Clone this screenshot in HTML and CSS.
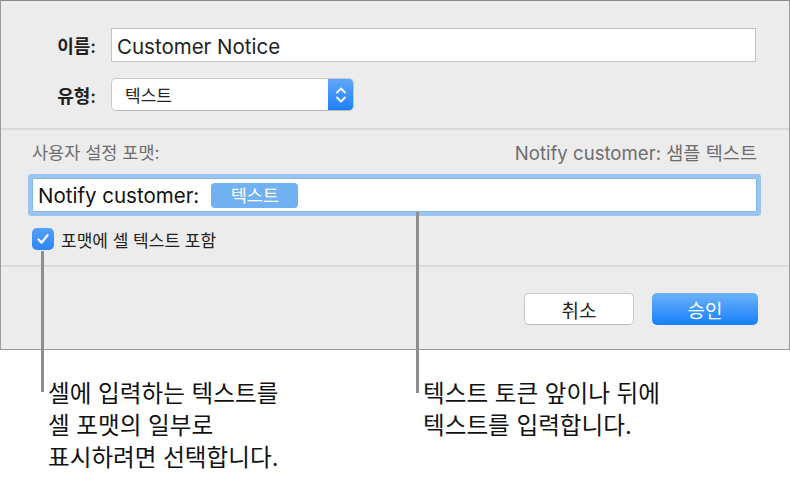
FILE: index.html
```html
<!DOCTYPE html>
<html lang="ko">
<head>
<meta charset="utf-8">
<title>Custom Format</title>
<link rel="stylesheet" href="styles.css">
</head>
<body>
<div class="dialog">
  <div class="top">
    <div class="row">
      <span class="lbl">이름:</span>
      <div class="input">Customer Notice</div>
    </div>
    <div class="row row2">
      <span class="lbl">유형:</span>
      <div class="select">
        <span class="select-text">텍스트</span>
        <span class="stepper">
          <svg width="12" height="20" viewBox="0 0 12 20"><path d="M2 7.5 L6 3.5 L10 7.5 M2 12.5 L6 16.5 L10 12.5" fill="none" stroke="#fff" stroke-width="1.8" stroke-linecap="round" stroke-linejoin="round"/></svg>
        </span>
      </div>
    </div>
  </div>
  <div class="sep"></div>
  <div class="mid">
    <div class="head">
      <span>사용자 설정 포맷:</span>
      <span>Notify customer: 샘플 텍스트</span>
    </div>
    <div class="tokenfield">
      <span class="prefix">Notify customer:</span>
      <span class="token">텍스트</span>
    </div>
    <div class="check">
      <span class="box">
        <svg width="14" height="14" viewBox="0 0 14 14"><path d="M2.5 7.5 L5.6 10.6 L11.5 3.2" fill="none" stroke="#fff" stroke-width="2.2" stroke-linecap="round" stroke-linejoin="round"/></svg>
      </span>
      <span class="check-label">포맷에 셀 텍스트 포함</span>
    </div>
  </div>
  <div class="sep"></div>
  <div class="foot">
    <button class="btn">취소</button>
    <button class="btn primary">승인</button>
  </div>
</div>
<div class="notes">
  <p class="note note-left">셀에 입력하는 텍스트를<br>셀 포맷의 일부로<br>표시하려면 선택합니다.</p>
  <p class="note note-right">텍스트 토큰 앞이나 뒤에<br>텍스트를 입력합니다.</p>
</div>
<div class="leader leader-check"></div>
<div class="leader leader-field"></div>
</body>
</html>
```
FILE: styles.css
```css
* { box-sizing: border-box; }
html, body { margin: 0; padding: 0; }
body {
  width: 790px;
  height: 487px;
  background: #fff;
  font-family: Inter, "Noto Sans CJK KR", sans-serif;
  color: #1e1e1e;
  position: relative;
  overflow: hidden;
}
.dialog {
  width: 790px;
  height: 350px;
  background: #ececec;
  border: 1px solid #9a9a9a;
  border-top-color: #8c8c8c;
  display: flex;
  flex-direction: column;
}
.top {
  padding: 27px 0 17px 0;
}
.row {
  display: flex;
  align-items: center;
  height: 34px;
}
.row2 {
  margin-top: 16px;
  height: 33px;
}
.lbl {
  width: 95px;
  text-align: right;
  margin-right: 15px;
  font-size: 18px;
  font-weight: 600;
  color: #222;
}
.input {
  width: 645px;
  height: 34px;
  background: #fff;
  border: 1px solid #c3c3c3;
  border-top-color: #bdbdbd;
  font-size: 20.5px;
  line-height: 32px;
  padding: 2px 0 0 5px;
  color: #222;
}
.select {
  width: 243px;
  height: 33px;
  background: #fff;
  border: 1px solid #c9c9c9;
  border-bottom-color: #b9b9b9;
  border-radius: 5px;
  display: flex;
  align-items: center;
  overflow: hidden;
}
.select-text {
  flex: 1;
  padding-left: 13px;
  font-size: 17px;
  color: #222;
}
.stepper {
  width: 26px;
  height: 33px;
  margin: -1px -1px -1px 0;
  border-radius: 0 5px 5px 0;
  background: linear-gradient(#62a8fa, #1a7ffb);
  display: flex;
  align-items: center;
  justify-content: center;
}
.sep {
  height: 2px;
  background: #dadada;
}
.mid {
  padding: 13px 32px 15px 31px;
}
.head {
  display: flex;
  justify-content: space-between;
  font-size: 18.6px;
  line-height: 20px;
  color: #6e6e6e;
}
.head span:first-child { font-size: 17.5px; }
.tokenfield {
  margin: 15px 0 0 0;
  height: 34px;
  background: #fff;
  border: 1px solid #86b5e6;
  box-shadow: 0 0 0 4px #9bc5f1;
  border-radius: 1px;
  display: flex;
  align-items: center;
  padding-left: 5px;
}
.prefix {
  font-size: 20.5px;
  color: #111;
}
.token {
  margin-left: 12px;
  width: 87px;
  height: 25px;
  border-radius: 4px;
  background: #70b1f1;
  color: #fff;
  font-size: 17.5px;
  line-height: 25px;
  text-align: center;
}
.check {
  margin-top: 16px;
  display: flex;
  align-items: center;
  height: 22px;
}
.box {
  width: 22px;
  height: 22px;
  border-radius: 5px;
  background: linear-gradient(#55a0f8, #2b86f6);
  display: flex;
  align-items: center;
  justify-content: center;
}
.check-label {
  margin-left: 7px;
  font-size: 17px;
  color: #222;
}
.foot {
  padding: 26px 31px 0 0;
  display: flex;
  justify-content: flex-end;
  gap: 18px;
}
.btn {
  height: 32px;
  border-radius: 5px;
  font-family: Inter, "Noto Sans CJK KR", sans-serif;
  font-size: 19px;
  padding: 0;
}
.btn:first-child {
  width: 110px;
  background: #fff;
  border: 1px solid #c8c8c8;
  border-bottom-color: #b8b8b8;
  color: #222;
}
.btn.primary {
  width: 106px;
  border: none;
  background: linear-gradient(#6cb2fa, #1680fb);
  color: #fff;
}
.notes {
  display: flex;
  padding-left: 48px;
  margin-top: 28px;
}
.note {
  margin: 0;
  font-size: 23.6px;
  line-height: 32px;
  color: #111;
}
.note-left { width: 375px; }
.leader {
  position: absolute;
  width: 3px;
  background: #8e8e8e;
}
.leader-check {
  left: 41px;
  top: 251px;
  height: 141px;
}
.leader-field {
  left: 416px;
  top: 212px;
  height: 181px;
}
```
